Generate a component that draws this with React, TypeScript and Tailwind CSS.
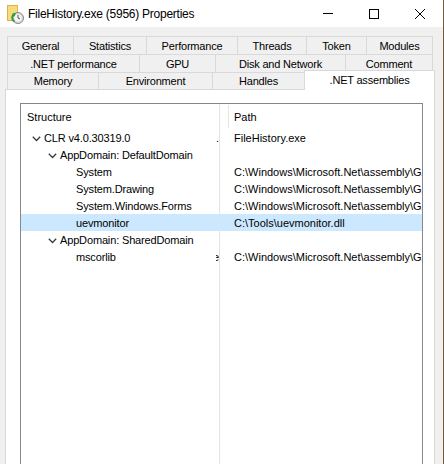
import React from "react";

type TabProps = {
    label: string;
    className: string;
};

function Tab({ label, className }: TabProps) {
    return (
        <div
            className={`flex h-full shrink-0 items-center justify-center border-l border-t border-[#d9d9d9] bg-[#f0f0f0] pt-[1px] text-[11px] tracking-[-0.2px] text-black ${className}`}
        >
            {label}
        </div>
    );
}

function Chevron() {
    return (
        <svg width="9" height="6" viewBox="0 0 9 6" className="block">
            <polyline points="0.8,0.8 4.5,4.5 8.2,0.8" fill="none" stroke="#3a3a3a" strokeWidth="1.3" />
        </svg>
    );
}

function AppIcon() {
    return (
        <svg width="20" height="20" viewBox="0 0 20 20" className="block">
            <rect x="3.5" y="1.5" width="10" height="15" fill="#f8dc7c" stroke="#dcb24a" />
            <circle cx="14" cy="14" r="5.5" fill="#d7d7d7" stroke="#8a8a8a" />
            <circle cx="14" cy="14" r="3.8" fill="#f4f4f4" />
            <line x1="14" y1="14" x2="14" y2="11" stroke="#555" strokeWidth="1" />
            <line x1="14" y1="14" x2="16" y2="15" stroke="#555" strokeWidth="1" />
            <path d="M10.5 10.5 C7.5 11.5 7.5 16 10.5 17.5" fill="none" stroke="#2f9a3a" strokeWidth="2" />
            <polygon points="8,9.5 12,9 10.5,12.5" fill="#2f9a3a" />
        </svg>
    );
}

type TreeRow = {
    label: string;
    level: number;
    expandable?: boolean;
    path?: string;
    selected?: boolean;
    clip?: "dot" | "e";
};

const rows: TreeRow[] = [
    { label: "CLR v4.0.30319.0", level: 0, expandable: true, path: "FileHistory.exe", clip: "dot" },
    { label: "AppDomain: DefaultDomain", level: 1, expandable: true },
    { label: "System", level: 2, path: "C:\\Windows\\Microsoft.Net\\assembly\\GAC_MSIL\\System" },
    { label: "System.Drawing", level: 2, path: "C:\\Windows\\Microsoft.Net\\assembly\\GAC_MSIL\\System.Drawing" },
    { label: "System.Windows.Forms", level: 2, path: "C:\\Windows\\Microsoft.Net\\assembly\\GAC_MSIL\\System.Windows.Forms" },
    { label: "uevmonitor", level: 2, path: "C:\\Tools\\uevmonitor.dll", selected: true },
    { label: "AppDomain: SharedDomain", level: 1, expandable: true },
    { label: "mscorlib", level: 2, path: "C:\\Windows\\Microsoft.Net\\assembly\\GAC_64\\mscorlib", clip: "e" },
];

const indents = ["pl-[7px]", "pl-[23px]", "pl-[39px]"];

export default function App() {
    return (
        <div className="flex h-[464px] w-[444px] flex-col overflow-hidden border-r border-[#7a5c32] bg-[#f0f0f0] font-['Liberation_Sans',Arial,sans-serif] text-black">
            {/* title bar */}
            <div className="flex h-[27px] shrink-0 items-center bg-white">
                <div className="ml-[4px] w-[24px]">
                    <AppIcon />
                </div>
                <span className="text-[12px] tracking-[-0.25px]">FileHistory.exe (5956) Properties</span>
                <div className="ml-auto flex h-full">
                    <div className="flex w-[46px] items-center justify-center">
                        <div className="h-px w-[10px] bg-black" />
                    </div>
                    <div className="flex w-[46px] items-center justify-center">
                        <div className="h-[10px] w-[10px] border border-black" />
                    </div>
                    <div className="flex w-[46px] items-center justify-center">
                        <svg width="10" height="10" viewBox="0 0 10 10">
                            <line x1="0" y1="0" x2="10" y2="10" stroke="#000" strokeWidth="1" />
                            <line x1="10" y1="0" x2="0" y2="10" stroke="#000" strokeWidth="1" />
                        </svg>
                    </div>
                </div>
            </div>

            {/* tab rows */}
            <div className="mt-[9px] ml-[7px] flex h-[18px] shrink-0">
                <Tab label="General" className="w-[66px]" />
                <Tab label="Statistics" className="w-[73px]" />
                <Tab label="Performance" className="w-[91px]" />
                <Tab label="Threads" className="w-[69px]" />
                <Tab label="Token" className="w-[60px]" />
                <Tab label="Modules" className="w-[67px] border-r" />
            </div>
            <div className="ml-[7px] flex h-[18px] shrink-0">
                <Tab label=".NET performance" className="w-[132px]" />
                <Tab label="GPU" className="w-[76px]" />
                <Tab label="Disk and Network" className="w-[130px]" />
                <Tab label="Comment" className="w-[88px] border-r" />
            </div>
            <div className="ml-[7px] flex h-[17px] shrink-0 items-start">
                <Tab label="Memory" className="w-[91px]" />
                <Tab label="Environment" className="w-[114px]" />
                <Tab label="Handles" className="w-[92px]" />
                <div className="relative z-10 -mt-[2px] flex h-[20px] w-[131px] shrink-0 items-center justify-center border-x border-t border-[#d9d9d9] bg-white text-[11px] tracking-[-0.2px]">
                    .NET assemblies
                </div>
            </div>

            {/* tab page */}
            <div className="ml-[5px] flex w-[430px] flex-1 flex-col border-x border-t border-[#d9d9d9] bg-white">
                <div className="mt-[13px] ml-[14px] flex w-[403px] flex-1 border-x border-t border-[#828790] text-[11px]">
                    <div className="w-[199px] shrink-0 border-r border-[#e3e3e3]">
                        <div className="flex h-[25px] items-center pl-[6px] pt-[2px]">Structure</div>
                        {rows.map((row) => (
                            <div
                                key={row.label}
                                className={`flex h-[17px] items-center whitespace-nowrap pt-[2px] tracking-[-0.15px] ${indents[row.level]} ${row.selected ? "bg-[#cce8ff]" : ""}`}
                            >
                                <div className="flex w-[16px] shrink-0 items-center justify-center">
                                    {row.expandable && <Chevron />}
                                </div>
                                <span>{row.label}</span>
                                {row.clip === "dot" && <span className="ml-auto w-[3px] overflow-hidden">.</span>}
                                {row.clip === "e" && (
                                    <span className="ml-auto inline-block w-[3px] overflow-hidden">
                                        <span className="-ml-[3px] inline-block">e</span>
                                    </span>
                                )}
                            </div>
                        ))}
                    </div>
                    <div className="min-w-0 flex-1 overflow-hidden">
                        <div className="flex h-[25px] items-start">
                            <div className="w-[8px] shrink-0" />
                            <div className="mt-[1px] h-[23px] w-px bg-[#e5e5e5]" />
                            <div className="flex h-full items-center pl-[5px] pt-[2px]">Path</div>
                        </div>
                        {rows.map((row) => (
                            <div
                                key={row.label}
                                className={`flex h-[17px] items-center overflow-hidden whitespace-nowrap pl-[14px] pt-[2px] ${row.selected ? "bg-[#cce8ff]" : ""}`}
                            >
                                {row.path ?? ""}
                            </div>
                        ))}
                    </div>
                </div>
            </div>
        </div>
    );
}
